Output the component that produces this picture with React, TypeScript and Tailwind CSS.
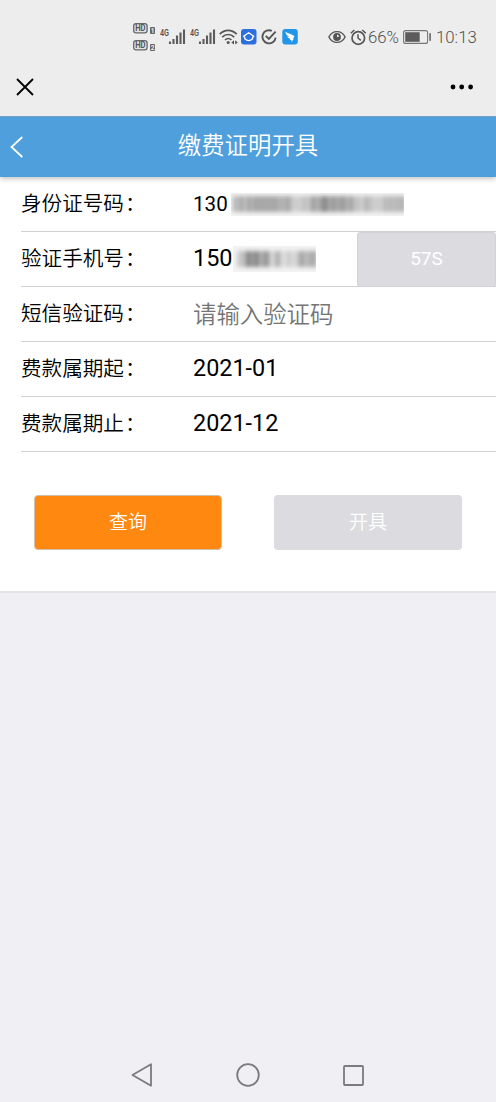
import { useState } from "react";

const FONT = "font-[Roboto,'Noto_Sans_CJK_SC',sans-serif]";
const CJK = "font-['Noto_Sans_CJK_SC_DemiLight','Noto_Sans_CJK_SC',sans-serif] font-[350]";

function HdBadge({ slot }: { slot: number }) {
  return (
    <svg width="23" height="11" viewBox="0 0 23 11" className="block">
      <rect x="0.7" y="0.7" width="13.4" height="9.2" rx="2.4" fill="#e4e4e4" stroke="#666" strokeWidth="1.3" />
      <text x="2.2" y="8.4" fontSize="8.4" fontWeight="700" fill="#555" textLength="10.4" lengthAdjust="spacingAndGlyphs">
        HD
      </text>
      <rect x="17" y="4" width="5" height="7" rx="1" fill="#666" />
      <text x="19.5" y="9.8" textAnchor="middle" fontSize="6.5" fontWeight="700" fill="#eee">
        {slot}
      </text>
    </svg>
  );
}

function Signal() {
  return (
    <svg width="26" height="18" viewBox="0 0 26 18" className="block shrink-0">
      <text x="0" y="8.3" fontSize="9.4" fontWeight="600" fill="#555" textLength="9" lengthAdjust="spacingAndGlyphs">
        4G
      </text>
      <path
        d="M10 13.5V16M13.5 11V16M17 7.5V16M20.5 4.5V16M24 1.5V16"
        stroke="#5c5c5c"
        strokeWidth="2.1"
        strokeLinecap="butt"
      />
    </svg>
  );
}

function StatusBar() {
  return (
    <div className="flex h-[74px] items-center pl-[133px] text-[#505050]">
      <div className="flex w-[27px] flex-col gap-[6px]">
        <HdBadge slot={1} />
        <HdBadge slot={2} />
      </div>
      <Signal />
      <div className="w-1 shrink-0" />
      <Signal />
      <svg width="19" height="16" viewBox="0 0 19 16" fill="none" stroke="#555" strokeWidth="1.7" className="ml-[3px] shrink-0">
        <path d="M0.7 5.2C5.7 0.1 12.7 0.1 17.7 5.2M3.2 8.2C6.7 4.6 11.7 4.6 15.2 8.2M6 11C8 9 10.5 9 12.4 11" />
        <circle cx="9.2" cy="13.5" r="1.5" fill="#555" stroke="none" />
        <path d="M15 11.2V15.5L12.3 13.4ZM16.2 11.2V15.5L18.8 13.4Z" fill="#555" stroke="none" />
      </svg>
      <svg width="16" height="16" viewBox="0 0 16 16" className="ml-[3px] shrink-0">
        <rect width="15.5" height="15.5" rx="3" fill="#2d6fdd" />
        <path
          d="M7.7 3.7L12.8 7.2L11.6 8.2V9.8Q7.7 13.4 3.8 9.8V8.2L2.6 7.2Z"
          fill="none"
          stroke="#fff"
          strokeWidth="1.3"
          strokeLinejoin="round"
        />
      </svg>
      <svg width="17" height="16" viewBox="0 0 17 16" fill="none" stroke="#555" strokeWidth="1.9" className="ml-1 shrink-0">
        <path d="M10.8 1.8A6.6 6.6 0 1 0 14.6 8.6" />
        <path d="M4.8 7L7.9 10L14.6 2.7" />
      </svg>
      <svg width="16" height="16" viewBox="0 0 16 16" className="ml-1 shrink-0">
        <rect x="0.3" width="15.5" height="15.5" rx="3" fill="#2196e8" />
        <path d="M3.2 2.8C6.5 4.8 9.5 5 12.2 6.9C12.3 7.9 11.6 8.9 10.9 9.7L11.8 9.8L9.3 13.3L9.5 11L7.8 10.7L8.2 9.8Q6.2 9.2 5 7.7L7.2 7.9Q4 6.5 3.2 2.8Z" fill="#fff" />
      </svg>
      <svg width="18" height="14" viewBox="0 0 18 14" fill="none" className="ml-[30px] shrink-0">
        <path d="M0.9 7C4.4-0.2 13.6-0.2 17.1 7C13.6 14.2 4.4 14.2 0.9 7Z" stroke="#555" strokeWidth="1.4" />
        <circle cx="9" cy="7" r="3.9" fill="#555" />
        <path d="M9 4.6A2.3 2.3 0 0 1 11 6.8L9 7Z" fill="#eee" />
      </svg>
      <svg width="17" height="17" viewBox="0 0 17 17" fill="none" stroke="#555" strokeWidth="1.7" className="ml-1 shrink-0">
        <circle cx="8.3" cy="9" r="6.3" />
        <path d="M8 5.2V9L10.8 11.3M0.8 4.2L4.3 1M12.3 1L15.8 4.2" strokeWidth="1.5" />
      </svg>
      <span className="ml-[1px] w-[35px] text-[16.8px] leading-none font-light">66%</span>
      <svg width="29" height="14" viewBox="0 0 29 14" className="shrink-0">
        <rect x="0.6" y="0.6" width="24" height="12.8" rx="2" fill="none" stroke="#777" strokeWidth="1.1" />
        <rect x="2.2" y="2.2" width="14.5" height="9.6" fill="#5c5c5c" />
        <rect x="26.3" y="3.2" width="1.6" height="7.6" fill="#666" />
      </svg>
      <span className="ml-1 text-[16.8px] leading-none font-light">10:13</span>
    </div>
  );
}

// stripe darkness for the hidden digits, 0 - 9
const ID_MASK = "1425244353535353434422223235345644544543523224231314242425";
const PHONE_MASK = "0132564653552143112212352435";

function Mask({ pattern, className }: { pattern: string; className: string }) {
  return (
    <div className={`overflow-hidden bg-[#f3f3f3] ${className}`}>
      <div className="flex h-full items-center blur-[2px]">
        {pattern.split("").map((c, i) => (
          <div key={i} className="h-[16px] flex-1 bg-black" style={{ opacity: Number(c) / 13 }} />
        ))}
      </div>
    </div>
  );
}

function Row({ label, children }: { label: string; children: React.ReactNode }) {
  return (
    <div className="ml-[21px] flex h-[55px] items-center border-b border-[#cfd1d5]">
      <label className={`w-[172px] shrink-0 pb-[3px] text-[20.6px] leading-none ${CJK}`}>
        {label}
        <span className="ml-px">：</span>
      </label>
      {children}
    </div>
  );
}

export default function App() {
  const [code, setCode] = useState("");

  return (
    <div className={`flex h-[1102px] w-[496px] flex-col overflow-hidden bg-[#efeff4] text-black ${FONT}`}>
      <div className="z-20 h-[116px] shrink-0 bg-[#ededed]">
        <StatusBar />
        <div className="flex h-[26px] items-center justify-between pr-[22px] pl-4">
          <svg width="18" height="18" viewBox="0 0 18 18" stroke="#000" strokeWidth="1.8">
            <path d="M1 1L17 17M17 1L1 17" />
          </svg>
          <svg width="24" height="6" viewBox="0 0 24 6">
            <circle cx="3" cy="3" r="2.4" />
            <circle cx="11.7" cy="3" r="2.4" />
            <circle cx="20.6" cy="3" r="2.4" />
          </svg>
        </div>
      </div>

      <header className="z-10 flex h-[61px] shrink-0 items-center border-t border-[#6f9fc4] bg-[#4e9fdb] text-white shadow-[0_1px_6px_rgba(0,0,0,0.3)]">
        <svg width="14" height="22" viewBox="0 0 14 22" fill="none" stroke="#fff" strokeWidth="1.8" className="ml-[10px]">
          <path d="M12.3 1L1.5 11L12.3 21" />
        </svg>
        <h1 className={`mr-6 flex-1 pb-1 text-center text-[23.4px] leading-none ${CJK}`}>缴费证明开具</h1>
      </header>

      <main className="h-[416px] shrink-0 border-b-2 border-[#e4e4e7] bg-white">
        <Row label="身份证号码">
          <span className="w-[38px] text-[20.6px] leading-none">130</span>
          <Mask pattern={ID_MASK} className="h-[23px] w-[173px]" />
        </Row>
        <Row label="验证手机号">
          <span className="w-[40px] text-[23.4px] leading-none">150</span>
          <Mask pattern={PHONE_MASK} className="h-[26px] w-[83px]" />
          <button className="ml-auto h-[55px] w-[139px] rounded-[3px] border border-[#d2d2d8] bg-[#dcdbe0] text-[19px] text-white">
            57S
          </button>
        </Row>
        <Row label="短信验证码">
          <input
            value={code}
            onChange={(e) => setCode(e.target.value)}
            placeholder="请输入验证码"
            className={`h-10 w-[250px] pb-[3px] text-[23.4px] outline-none placeholder:text-[#757575] ${CJK}`}
          />
        </Row>
        <Row label="费款属期起">
          <span className="text-[23.4px] leading-none">2021-01</span>
        </Row>
        <Row label="费款属期止">
          <span className="text-[23.4px] leading-none">2021-12</span>
        </Row>
        <div className="mt-[43px] flex justify-between pr-[34px] pl-[34px]">
          <button className={`h-[55px] w-[188px] rounded-[4px] border border-[#d3bfa8] bg-[#ff8811] pb-0.5 text-[19px] text-white ${CJK}`}>
            查询
          </button>
          <button className={`h-[55px] w-[188px] rounded-[4px] bg-[#dcdbe0] pb-0.5 text-[19px] text-white ${CJK}`}>开具</button>
        </div>
      </main>

      <nav className="mt-auto flex h-[54px] items-center justify-between pr-[132px] pl-[131px]">
        <svg width="22" height="24" viewBox="0 0 22 24" fill="none" stroke="#7b7b7d" strokeWidth="1.8" strokeLinejoin="round">
          <path d="M1.5 12L20 1.3V22.7Z" />
        </svg>
        <svg width="24" height="24" viewBox="0 0 24 24" fill="none" stroke="#7b7b7d" strokeWidth="1.8">
          <circle cx="12" cy="12" r="10.8" />
        </svg>
        <svg width="21" height="21" viewBox="0 0 21 21" fill="none" stroke="#7b7b7d" strokeWidth="1.8">
          <rect x="1" y="1" width="19" height="19" rx="1" />
        </svg>
      </nav>
    </div>
  );
}
